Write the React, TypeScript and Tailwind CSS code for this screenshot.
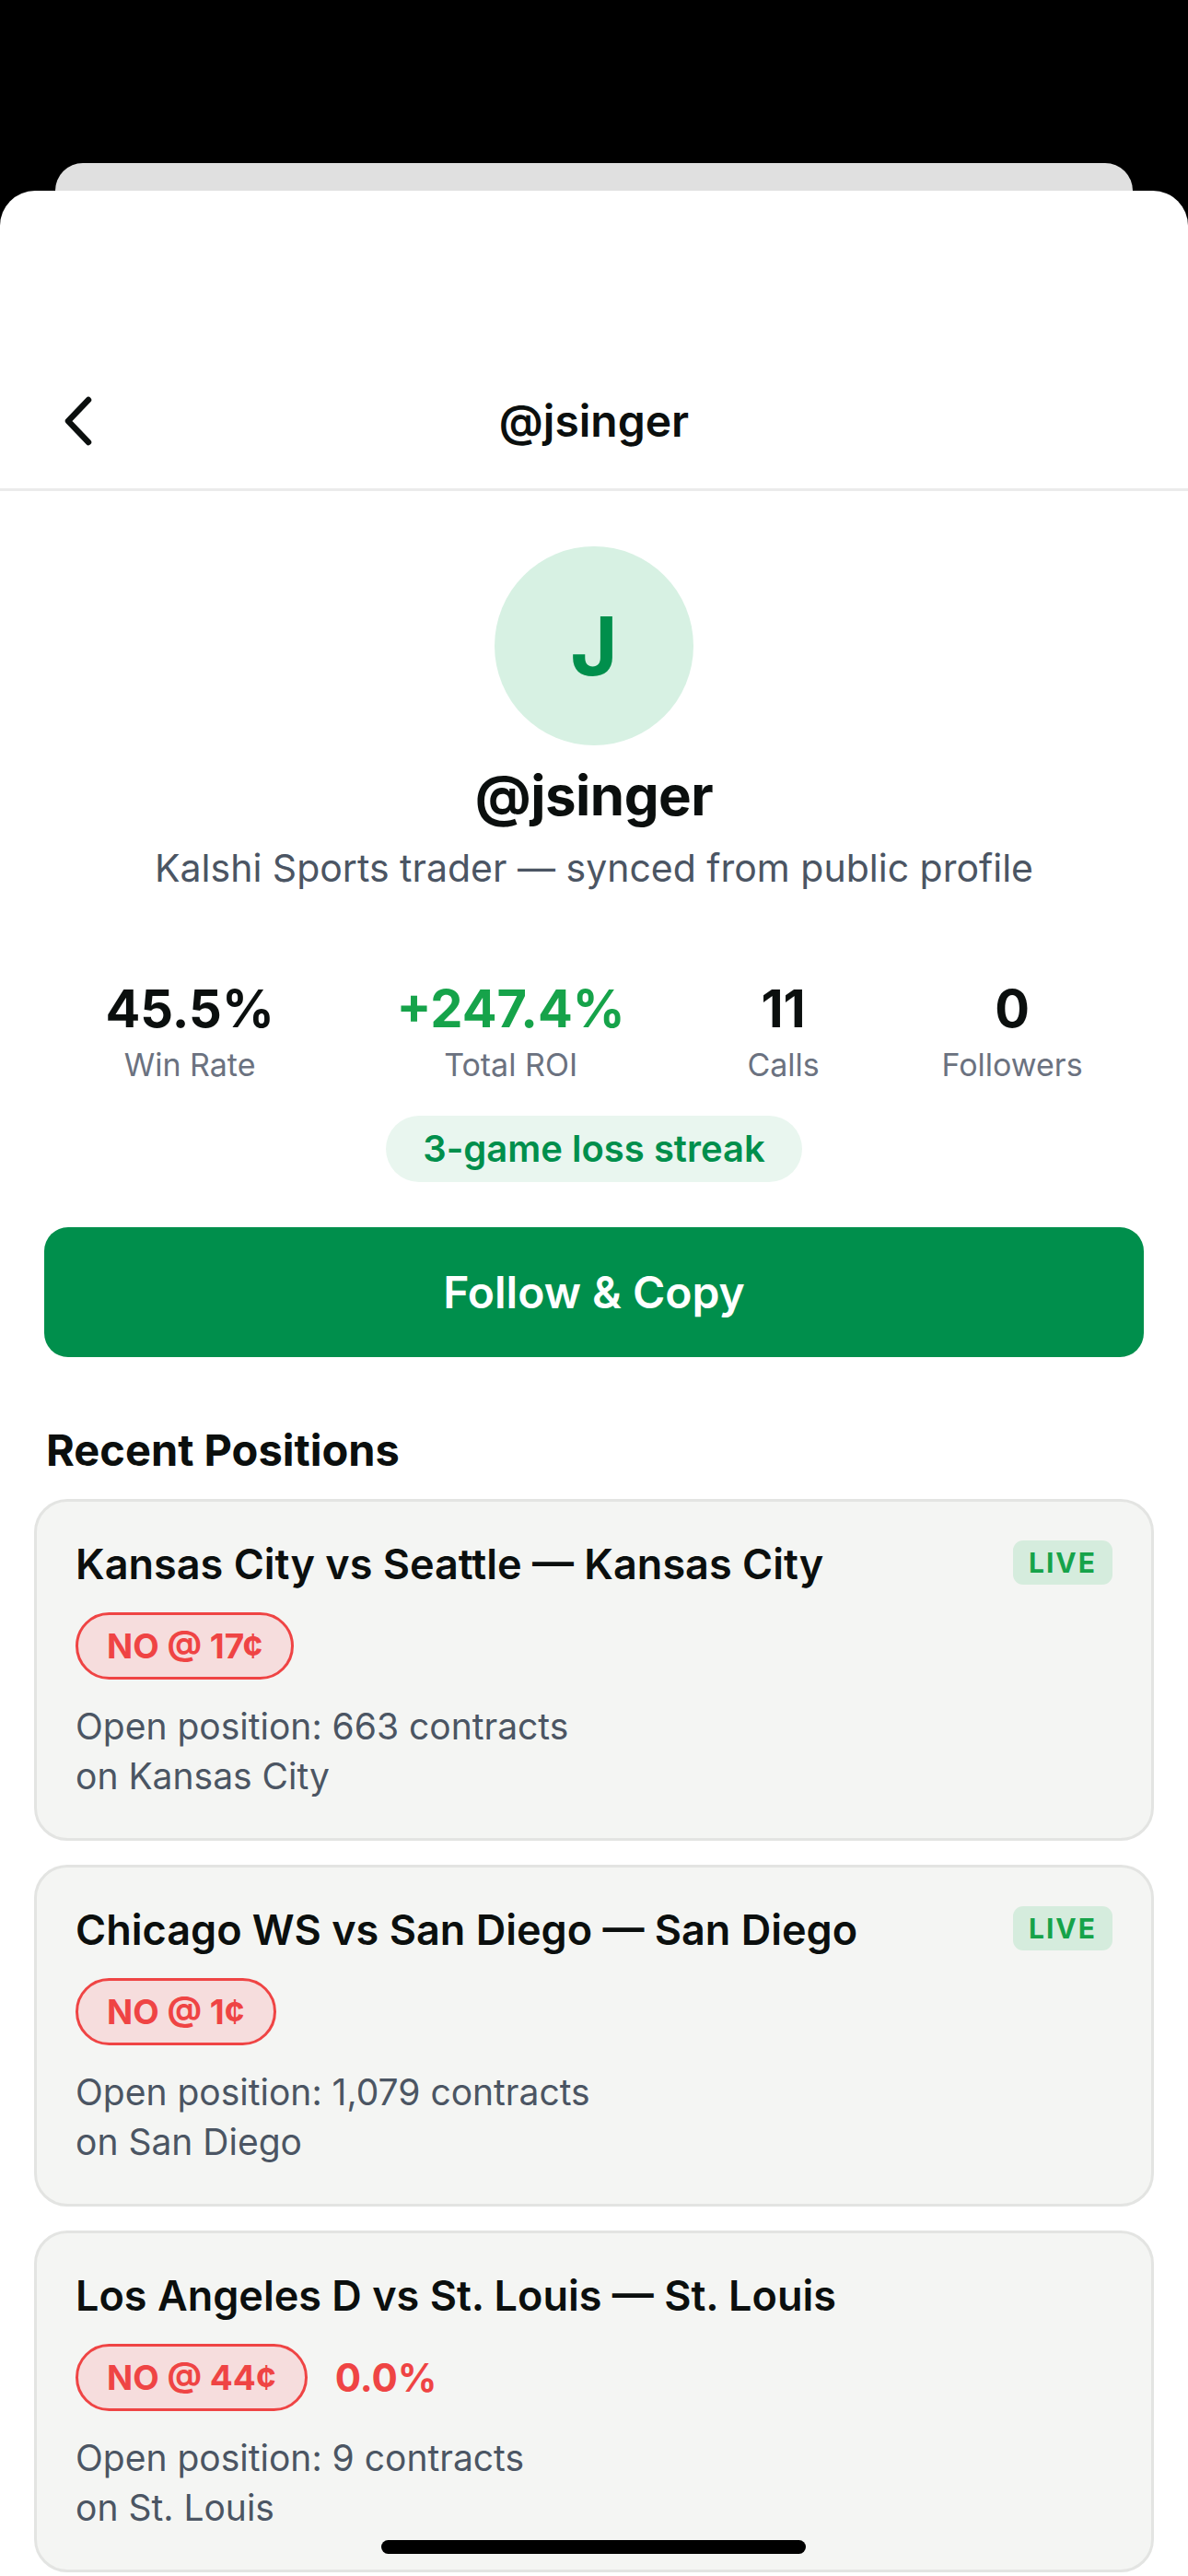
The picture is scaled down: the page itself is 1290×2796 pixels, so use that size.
import React from "react";

interface Position {
  title: string;
  price: string;
  contracts: string;
  team: string;
  live: boolean;
  change?: string;
}

const positions: Position[] = [
  { title: "Kansas City vs Seattle — Kansas City", price: "NO @ 17¢", contracts: "663", team: "Kansas City", live: true },
  { title: "Chicago WS vs San Diego — San Diego", price: "NO @ 1¢", contracts: "1,079", team: "San Diego", live: true },
  { title: "Los Angeles D vs St. Louis — St. Louis", price: "NO @ 44¢", contracts: "9", team: "St. Louis", live: false, change: "0.0%" },
];

const stats = [
  { value: "45.5%", label: "Win Rate", green: false },
  { value: "+247.4%", label: "Total ROI", green: true },
  { value: "11", label: "Calls", green: false },
  { value: "0", label: "Followers", green: false },
];

function PositionCard({ p }: { p: Position }) {
  return (
    <div className="bg-[#f4f5f3] border-[3px] border-[#e3e4e2] rounded-[36px] px-[42px] pt-[42px] pb-[40px]">
      <div className="flex items-start justify-between">
        <div className="text-[45px] leading-[52px] font-semibold text-[#0b0f0e]">{p.title}</div>
        {p.live && (
          <span className="h-[48px] px-[17px] rounded-[11px] bg-[#d5ecdd] text-[#16a34a] text-[30px] font-bold tracking-[2px] flex items-center">
            LIVE
          </span>
        )}
      </div>

      <div className="flex items-center gap-[30px] mt-[26px]">
        <span className="h-[73px] px-[31px] rounded-full border-[3px] border-[#ef4444] bg-[#f6dddd] text-[#ef4444] text-[37px] font-bold flex items-center">
          {p.price}
        </span>
        {p.change && <span className="text-[42px] font-bold text-[#ef4444]">{p.change}</span>}
      </div>

      <div className="mt-[24px] text-[39px] leading-[54px] text-[#4b5563]">
        <div>Open position: {p.contracts} contracts</div>
        <div>on {p.team}</div>
      </div>
    </div>
  );
}

export default function App() {
  return (
    <div
      className="relative w-[1290px] h-[2796px] bg-black overflow-hidden flex flex-col"
      style={{ fontFamily: "Inter, 'Noto Sans', sans-serif" }}
    >
      {/* sheet behind */}
      <div className="h-[177px] shrink-0" />
      <div className="mx-[60px] h-[30px] shrink-0 bg-[#e0e0e0] rounded-t-[30px]" />

      <div className="flex-1 bg-white rounded-t-[38px] flex flex-col">
        {/* Header */}
        <div className="h-[326px] shrink-0 flex items-end border-b-[3px] border-[#ebebeb]">
          <div className="w-full h-[146px] grid grid-cols-[1fr_auto_1fr] items-center">
            <div className="pl-[66px] flex items-center">
              <svg width="36" height="56" viewBox="0 0 36 56" fill="none">
                <polyline
                  points="30,5 8,28 30,51"
                  stroke="#0b0f0e"
                  strokeWidth="6.5"
                  strokeLinecap="round"
                  strokeLinejoin="round"
                />
              </svg>
            </div>
            <div className="text-[48px] font-semibold text-[#0b0f0e]">@jsinger</div>
            <div />
          </div>
        </div>

        {/* Profile */}
        <div className="flex flex-col items-center">
          <div className="mt-[60px] w-[216px] h-[216px] rounded-full bg-[#d7f1e3] flex items-center justify-center">
            <span className="text-[88px] font-bold text-[#008f4c] leading-none">J</span>
          </div>
          <div className="mt-[18px] text-[60px] leading-[72px] font-bold text-[#0b0f0e] tracking-[-0.5px]">@jsinger</div>
          <div className="mt-[18px] text-[41px] leading-[50px] text-[#4b5563]">
            Kalshi Sports trader — synced from public profile
          </div>
        </div>

        {/* Stats */}
        <div className="mt-[98px] px-[48px] flex justify-around">
          {stats.map((s) => (
            <div key={s.label} className="flex flex-col items-center">
              <div className={`text-[56px] leading-[60px] font-bold ${s.green ? "text-[#16a34a]" : "text-[#0b0f0e]"}`}>
                {s.value}
              </div>
              <div className="mt-[11px] text-[34px] leading-[40px] text-[#6b7280]">{s.label}</div>
            </div>
          ))}
        </div>

        <div className="mt-[35px] flex justify-center">
          <span className="h-[72px] px-[40px] rounded-full bg-[#e9f6ef] text-[#008f4c] text-[40px] font-semibold flex items-center">
            3-game loss streak
          </span>
        </div>

        <div className="mt-[49px] px-[48px]">
          <button className="w-full h-[141px] rounded-[26px] bg-[#008f4c] text-white text-[48px] font-semibold">
            Follow &amp; Copy
          </button>
        </div>

        {/* Recent positions */}
        <div className="mt-[73px] px-[50px] text-[47px] leading-[56px] font-bold text-[#0b0f0e]">Recent Positions</div>

        <div className="mt-[25px] px-[37px] flex flex-col gap-[26px]">
          {positions.map((p) => (
            <PositionCard key={p.title} p={p} />
          ))}
        </div>
      </div>

      {/* home indicator */}
      <div className="absolute bottom-[24px] left-[414px] w-[461px] h-[15px] rounded-full bg-black" />
    </div>
  );
}
